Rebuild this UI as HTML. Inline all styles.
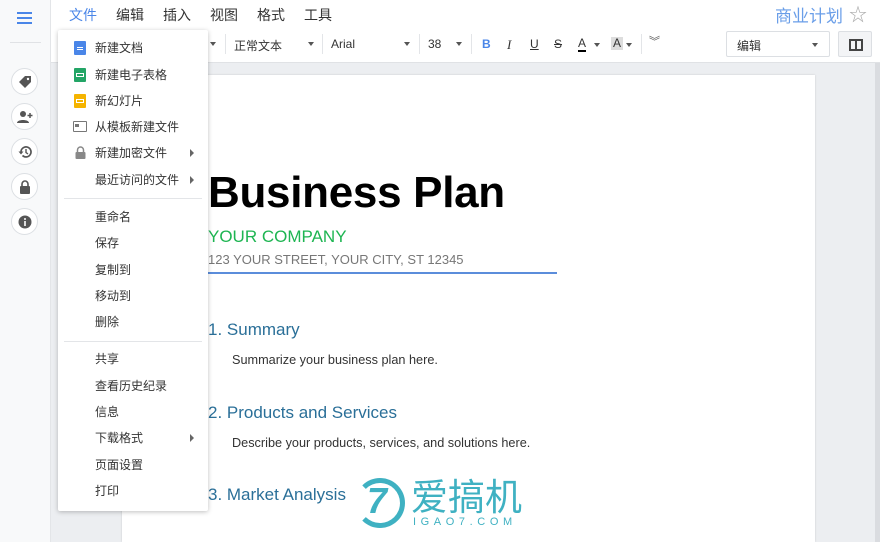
<!DOCTYPE html>
<html><head><meta charset="utf-8"><style>
*{margin:0;padding:0;box-sizing:border-box}
body{width:880px;height:542px;overflow:hidden;position:relative;font-family:"Liberation Sans","Noto Sans CJK SC",sans-serif;background:#eceef1;color:#333}
.abs{position:absolute}
#side{left:0;top:0;width:51px;height:542px;background:#f8f9fa;border-right:1px solid #e3e5e8}
.circ{position:absolute;left:11px;width:27px;height:27px;border-radius:50%;background:#fff;border:1px solid #dcdfe3;display:flex;align-items:center;justify-content:center}
#top{left:51px;top:0;width:829px;height:63px;background:#fff;border-bottom:1px solid #e0e2e5}
.mn{position:absolute;top:5px;font-size:14px;color:#333}
.tb{position:absolute;top:37px;font-size:12px;color:#333}
.caret{position:absolute;width:0;height:0;border-left:3.5px solid transparent;border-right:3.5px solid transparent;border-top:4px solid #555}
.sep{position:absolute;top:34px;width:1px;height:20px;background:#e3e5e8}
#page{left:122px;top:75px;width:693px;height:467px;background:#fff;box-shadow:0 0 2px rgba(0,0,0,.15)}
#menu{left:58px;top:30px;width:150px;height:481px;background:#fff;box-shadow:0 1px 5px rgba(0,0,0,.25);border-radius:2px}
.mi{position:absolute;left:37px;font-size:12px;color:#333;line-height:14px}
.ar{position:absolute;left:132px;width:0;height:0;border-top:4px solid transparent;border-bottom:4px solid transparent;border-left:4px solid #666}
.hr{position:absolute;left:6px;width:138px;height:1px;background:#e3e5e8}
.ic{position:absolute;left:16px;width:12px;height:14px;border-radius:1px}
h2{position:absolute;left:208px;font-weight:normal;font-size:17px;color:#2a6f98}
.p{position:absolute;left:232px;font-size:12.7px;color:#333}
</style></head><body>
<div id="side" class="abs">
 <div class="abs" style="left:17px;top:12px;width:15px;height:2px;background:#4a86e8;box-shadow:0 5px 0 #4a86e8,0 10px 0 #4a86e8"></div>
 <div class="abs" style="left:10px;top:42px;width:31px;height:1px;background:#e0e2e5"></div>
 <div class="circ" style="top:68px"><svg width="14" height="14" viewBox="0 0 14 14"><path d="M7 1h6v6l-6 6-6-6z" fill="#555"/><circle cx="10" cy="4" r="1.2" fill="#fff"/></svg></div>
 <div class="circ" style="top:103px"><svg width="16" height="14" viewBox="0 0 16 14"><circle cx="6" cy="4" r="3" fill="#555"/><path d="M0 13c0-4 12-4 12 0z" fill="#555"/><path d="M13 3v5M10.5 5.5h5" stroke="#555" stroke-width="1.5"/></svg></div>
 <div class="circ" style="top:138px"><svg width="14" height="14" viewBox="0 0 14 14"><path d="M3 7a5 5 0 1 1 1.5 3.5" stroke="#555" stroke-width="1.7" fill="none"/><path d="M0.5 6.5h5L3 9.5z" fill="#555"/><path d="M8 4v3.5l2 1.5" stroke="#555" stroke-width="1.4" fill="none"/></svg></div>
 <div class="circ" style="top:173px"><svg width="12" height="14" viewBox="0 0 12 14"><path d="M3 6V4a3 3 0 0 1 6 0v2" stroke="#555" stroke-width="1.6" fill="none"/><rect x="1" y="6" width="10" height="8" rx="1" fill="#555"/></svg></div>
 <div class="circ" style="top:208px"><svg width="14" height="14" viewBox="0 0 14 14"><circle cx="7" cy="7" r="6.5" fill="#555"/><rect x="6.2" y="6" width="1.6" height="5" fill="#fff"/><circle cx="7" cy="4" r="1" fill="#fff"/></svg></div>
</div>
<div id="top" class="abs">
 <span class="mn" style="left:18px;color:#4a86e8">文件</span>
 <span class="mn" style="left:65px">编辑</span>
 <span class="mn" style="left:112px">插入</span>
 <span class="mn" style="left:159px">视图</span>
 <span class="mn" style="left:206px">格式</span>
 <span class="mn" style="left:253px">工具</span>
 <span class="abs" style="left:724px;top:2px;font-size:17px;color:#6a9ee8">商业计划</span>
 <span class="abs" style="left:798px;top:1px;font-size:18px;color:#aaa">☆</span>
 <div class="caret" style="left:159px;top:42px"></div>
 <div class="sep" style="left:174px"></div>
 <span class="tb" style="left:183px">正常文本</span>
 <div class="caret" style="left:257px;top:42px"></div>
 <div class="sep" style="left:271px"></div>
 <span class="tb" style="left:280px">Arial</span>
 <div class="caret" style="left:353px;top:42px"></div>
 <div class="sep" style="left:368px"></div>
 <span class="tb" style="left:377px">38</span>
 <div class="caret" style="left:405px;top:42px"></div>
 <div class="sep" style="left:420px"></div>
 <span class="tb" style="left:431px;font-weight:bold;color:#4a86e8">B</span>
 <span class="tb" style="left:456px;font-style:italic;font-family:'Liberation Serif',serif;font-size:13px">I</span>
 <span class="tb" style="left:479px;text-decoration:underline">U</span>
 <span class="tb" style="left:503px;text-decoration:line-through">S</span>
 <span class="tb" style="left:527px;border-bottom:2px solid #000;line-height:13px">A</span>
 <div class="caret" style="left:543px;top:43px"></div>
 <span class="tb" style="left:560px;background:#ddd;padding:0 2px;line-height:13px">A</span>
 <div class="caret" style="left:575px;top:43px"></div>
 <div class="sep" style="left:590px"></div>
 <span class="tb" style="left:598px;top:33px;font-size:11px;color:#555">︾</span>
 <div class="abs" style="left:675px;top:31px;width:104px;height:26px;border:1px solid #dcdfe3;border-radius:2px;background:#fff"><span style="position:absolute;left:10px;top:5px;font-size:12px">编辑</span><div class="caret" style="left:85px;top:11px"></div></div>
 <div class="abs" style="left:787px;top:31px;width:34px;height:26px;border:1px solid #dcdfe3;border-radius:2px;background:#f3f4f6"><div style="position:absolute;left:10px;top:7px;width:14px;height:12px;border:2px solid #444"></div><div style="position:absolute;left:16px;top:7px;width:2px;height:12px;background:#444"></div></div>
</div>
<div class="abs" style="left:875px;top:63px;width:5px;height:479px;background:#dadce0"></div>
<div id="page" class="abs">
 <div class="abs" style="left:86px;top:93px;font-size:44px;font-weight:bold;color:#000;letter-spacing:-0.3px">Business Plan</div>
 <div class="abs" style="left:86px;top:152px;font-size:17px;color:#1eb552">YOUR COMPANY</div>
 <div class="abs" style="left:86px;top:177px;font-size:13px;color:#777">123 YOUR STREET, YOUR CITY, ST 12345</div>
 <div class="abs" style="left:86px;top:197px;width:349px;height:2px;background:#5b8ddb"></div>
</div>
<h2 style="top:320px">1. Summary</h2>
<div class="p" style="top:353px">Summarize your business plan here.</div>
<h2 style="top:403px">2. Products and Services</h2>
<div class="p" style="top:436px">Describe your products, services, and solutions here.</div>
<h2 style="top:485px">3. Market Analysis</h2>
<div class="abs" style="left:355px;top:478px;width:50px;height:50px;border:5px solid #3fb1c2;border-radius:50%;border-left-color:transparent;background:#fff"></div>
<div class="abs" style="left:367px;top:480px;font-size:36px;font-weight:bold;font-style:italic;color:#3fb1c2">7</div>
<div class="abs" style="left:411px;top:474px;font-size:37px;color:#3fb1c2;font-family:'Noto Sans CJK SC',sans-serif;line-height:40px">爱搞机</div>
<div class="abs" style="left:413px;top:516px;font-size:11px;color:#3fb1c2;letter-spacing:4.6px">IGAO7.COM</div>
<div id="menu" class="abs">
 <div class="ic" style="top:11px;background:#4a86e8"><div style="margin:6px 3px 0;height:1px;background:#fff;box-shadow:0 2px 0 #fff"></div></div>
 <span class="mi" style="top:11px">新建文档</span>
 <div class="ic" style="top:38px;background:#23a566"><div style="margin:5px 2px 0;height:4px;border:1px solid #fff"></div></div>
 <span class="mi" style="top:38px">新建电子表格</span>
 <div class="ic" style="top:64px;background:#f5b400"><div style="margin:5px 2px 0;height:4px;border:1px solid #fff"></div></div>
 <span class="mi" style="top:64px">新幻灯片</span>
 <div class="ic" style="top:91px;height:11px;width:14px;left:15px;border:1.5px solid #777"><div style="margin:2px 1px;width:4px;height:3px;background:#777"></div></div>
 <span class="mi" style="top:90px">从模板新建文件</span>
 <svg class="abs" style="left:17px;top:116px" width="11" height="13" viewBox="0 0 11 13"><path d="M2.5 6V4a3 3 0 0 1 6 0v2" stroke="#888" stroke-width="1.5" fill="none"/><rect x="0.5" y="6" width="10" height="7" rx="1" fill="#888"/></svg>
 <span class="mi" style="top:116px">新建加密文件</span><div class="ar" style="top:119px"></div>
 <span class="mi" style="top:143px">最近访问的文件</span><div class="ar" style="top:146px"></div>
 <div class="hr" style="top:168px"></div>
 <span class="mi" style="top:180px">重命名</span>
 <span class="mi" style="top:206px">保存</span>
 <span class="mi" style="top:233px">复制到</span>
 <span class="mi" style="top:259px">移动到</span>
 <span class="mi" style="top:285px">删除</span>
 <div class="hr" style="top:311px"></div>
 <span class="mi" style="top:322px">共享</span>
 <span class="mi" style="top:349px">查看历史纪录</span>
 <span class="mi" style="top:375px">信息</span>
 <span class="mi" style="top:401px">下载格式</span><div class="ar" style="top:404px"></div>
 <span class="mi" style="top:428px">页面设置</span>
 <span class="mi" style="top:454px">打印</span>
</div>
</body></html>
